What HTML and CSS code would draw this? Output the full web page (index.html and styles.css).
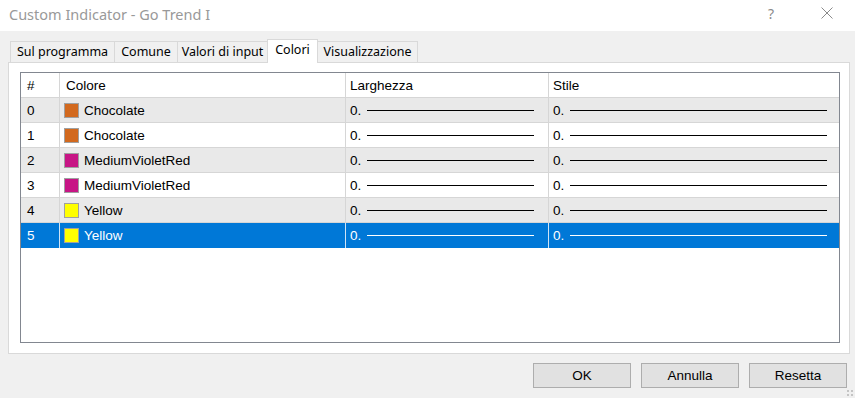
FILE: index.html
```html
<!DOCTYPE html>
<html lang="it">
  <head>
    <meta charset="UTF-8" />
    <title>Custom Indicator - Go Trend I</title>
    <link rel="stylesheet" href="styles.css">
  </head>
  <body>
    <div class="titlebar">
      <span class="title">Custom Indicator - Go Trend I</span>
      <span class="help">?</span>
      <svg class="close" width="12" height="12" viewBox="0 0 12 12">
        <path d="M0.5 0.5 L11.5 11.5 M11.5 0.5 L0.5 11.5" stroke="#8a8a8a" stroke-width="1" fill="none" />
      </svg>
    </div>

    <div class="dialog">
      <div class="tabs">
        <div class="tab w-sul">Sul programma</div>
        <div class="tab w-comune">Comune</div>
        <div class="tab w-valori">Valori di input</div>
        <div class="tab active w-colori">Colori</div>
        <div class="tab w-vis">Visualizzazione</div>
      </div>

      <div class="panel">
        <div class="listbox">
          <div class="row head">
            <div class="cell">#</div>
            <div class="cell">Colore</div>
            <div class="cell">Larghezza</div>
            <div class="cell">Stile</div>
          </div>

          <div class="row alt">
            <div class="cell">0</div>
            <div class="cell"><span class="swatch chocolate"></span>Chocolate</div>
            <div class="cell">0.<span class="line"></span></div>
            <div class="cell">0.<span class="line stile"></span></div>
          </div>
          <div class="row">
            <div class="cell">1</div>
            <div class="cell"><span class="swatch chocolate"></span>Chocolate</div>
            <div class="cell">0.<span class="line"></span></div>
            <div class="cell">0.<span class="line stile"></span></div>
          </div>
          <div class="row alt">
            <div class="cell">2</div>
            <div class="cell"><span class="swatch violet"></span>MediumVioletRed</div>
            <div class="cell">0.<span class="line"></span></div>
            <div class="cell">0.<span class="line stile"></span></div>
          </div>
          <div class="row">
            <div class="cell">3</div>
            <div class="cell"><span class="swatch violet"></span>MediumVioletRed</div>
            <div class="cell">0.<span class="line"></span></div>
            <div class="cell">0.<span class="line stile"></span></div>
          </div>
          <div class="row alt">
            <div class="cell">4</div>
            <div class="cell"><span class="swatch yellow"></span>Yellow</div>
            <div class="cell">0.<span class="line"></span></div>
            <div class="cell">0.<span class="line stile"></span></div>
          </div>
          <div class="row selected">
            <div class="cell">5</div>
            <div class="cell"><span class="swatch yellow"></span>Yellow</div>
            <div class="cell">0.<span class="line"></span></div>
            <div class="cell">0.<span class="line stile"></span></div>
          </div>
        </div>
      </div>

      <div class="buttons">
        <button class="btn">OK</button>
        <button class="btn">Annulla</button>
        <button class="btn">Resetta</button>
      </div>
    </div>

    <div class="grip">
      <span></span><span></span><span></span><span></span>
    </div>
  </body>
</html>
```

FILE: styles.css
```css
body {
  margin: 0;
  width: 855px;
  height: 398px;
  overflow: hidden;
  background-color: #f0f0f0;
  font-family: "Liberation Sans", Arial, sans-serif;
  font-size: 13.5px;
  color: #000;
  position: relative;
}
.titlebar {
  height: 31px;
  background: #fff;
  display: flex;
  align-items: center;
  padding-left: 9px;
  box-sizing: border-box;
}
.title {
  font-family: "Noto Sans", sans-serif;
  font-size: 14.5px;
  color: #999;
  flex: 1;
  margin-top: -4px;
}
.help {
  font-family: "Noto Sans", sans-serif;
  font-size: 14px;
  color: #8a8a8a;
  margin-right: 47px;
  margin-top: -4px;
}
.close {
  margin-right: 22px;
  margin-top: -5px;
}
.dialog {
  padding: 8px 5px 0 8px;
}
.tabs {
  display: flex;
  align-items: flex-end;
  height: 23px;
  padding-left: 2px;
  font-family: "Noto Sans", sans-serif;
  font-size: 12.5px;
}
.tab {
  box-sizing: border-box;
  height: 21px;
  border: 1px solid #d9d9d9;
  border-bottom: none;
  background: #f0f0f0;
  margin-left: -1px;
  text-align: center;
  line-height: 19px;
  white-space: nowrap;
}
.tab:first-child {
  margin-left: 0;
}
.tab.active {
  height: 24px;
  margin-bottom: -1px;
  background: #fff;
  position: relative;
  z-index: 1;
  line-height: 19px;
}
.w-sul { width: 105px; }
.w-comune { width: 64px; }
.w-valori { width: 91px; }
.w-colori { width: 51px; }
.w-vis { width: 101px; }
.panel {
  height: 292px;
  box-sizing: border-box;
  background: #fff;
  border: 1px solid #d9d9d9;
  padding: 9px 9px 0 11px;
}
.listbox {
  height: 271px;
  box-sizing: border-box;
  border: 1px solid #828790;
  background: #fff;
}
.row {
  display: grid;
  grid-template-columns: 39px 286px 203px 1fr;
  height: 25px;
  box-sizing: border-box;
  border-bottom: 1px solid #d6d6d6;
}
.row.alt {
  background: #e9e9e9;
}
.row.selected {
  background: #0078d7;
  color: #fff;
  border-bottom: none;
}
.cell {
  display: flex;
  align-items: center;
  padding-left: 6px;
  border-right: 1px solid #d6d6d6;
  white-space: nowrap;
  overflow: hidden;
}
.cell:last-child {
  border-right: none;
}
.row .cell:nth-child(2) {
  padding-left: 4px;
}
.row.head .cell:nth-child(2) {
  padding-left: 6px;
}
.row .cell:nth-child(3),
.row .cell:nth-child(4) {
  padding-left: 4px;
}
.swatch {
  width: 13px;
  height: 13px;
  border: 1px solid #a0a0a0;
  margin-right: 5px;
  flex: none;
}
.chocolate { background: #d2691e; }
.violet { background: #c71585; }
.yellow { background: #ffff00; }
.line {
  flex: 1;
  height: 1px;
  background: #000;
  margin-left: 6px;
  margin-right: 14px;
}
.line.stile {
  margin-right: 12px;
}
.selected .line {
  background: #fff;
}
.selected .cell {
  border-right-color: #cfe3f5;
}
.buttons {
  display: flex;
  justify-content: flex-end;
  gap: 10px;
  margin-top: 9px;
  padding-right: 3px;
}
.btn {
  width: 98px;
  height: 25px;
  background: #e1e1e1;
  border: 1px solid #adadad;
  font-family: "Liberation Sans", Arial, sans-serif;
  font-size: 13.5px;
  color: #000;
  padding: 0;
}
.grip {
  position: absolute;
  right: 2px;
  bottom: 2px;
  display: grid;
  grid-template-columns: 2px 2px;
  gap: 2px;
}
.grip span {
  width: 2px;
  height: 2px;
  background: #c4c4c4;
}
```
